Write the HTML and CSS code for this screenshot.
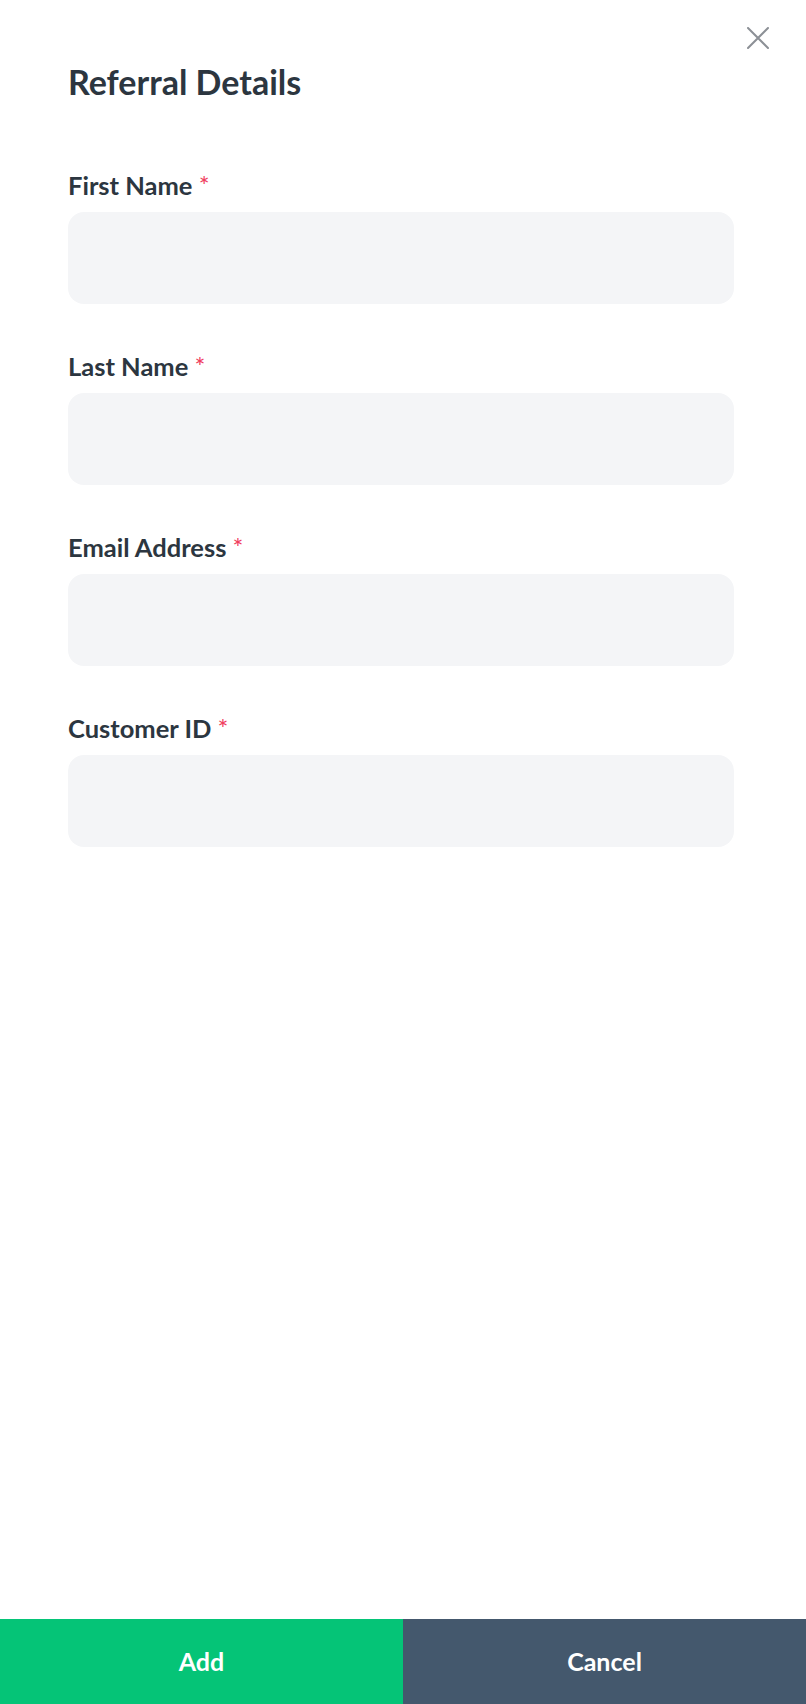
FILE: index.html
```html
<!DOCTYPE html>
<html lang="en">
<head>
    <meta charset="UTF-8">
    <meta name="viewport" content="width=device-width, initial-scale=1.0">
    <title>Referral Details</title>

    <link rel="stylesheet" href="styles.css">
</head>

<body>
    <div class="sheet">
        <button class="close" type="button" aria-label="Close">
            <svg width="22" height="22" viewBox="0 0 22 22">
                <path d="M1 1 L21 21 M21 1 L1 21" stroke="#8c9096" stroke-width="2" fill="none" stroke-linecap="round"/>
            </svg>
        </button>

        <section class="content">
            <h1>Referral Details</h1>

            <form class="fields">
                <div class="field">
                    <label for="first">First Name <span class="req">*</span></label>
                    <input class="input" id="first" type="text">
                </div>
                <div class="field">
                    <label for="last">Last Name <span class="req">*</span></label>
                    <input class="input" id="last" type="text">
                </div>
                <div class="field">
                    <label for="email">Email Address <span class="req">*</span></label>
                    <input class="input" id="email" type="email">
                </div>
                <div class="field">
                    <label for="customer">Customer ID <span class="req">*</span></label>
                    <input class="input" id="customer" type="text">
                </div>
            </form>
        </section>

        <footer class="actions">
            <button class="btn add" type="button">Add</button>
            <button class="btn cancel" type="button">Cancel</button>
        </footer>
    </div>
</body>
</html>
```

FILE: styles.css
```css
body {
    margin: 0px;
    background: white;
    font-family: Lato, "Open Sans", sans-serif;
    color: #2c3640;
}
.sheet {
    position: relative;
    min-height: 100vh;
    display: flex;
    flex-direction: column;
}
.close {
    position: absolute;
    top: 27px;
    right: 37px;
    width: 22px;
    height: 22px;
    padding: 0px;
    border: none;
    background: none;
    cursor: pointer;
}
.close svg {
    display: block;
}
.content {
    padding: 62px 72px 0px 68px;
}
h1 {
    margin: 0px;
    font-size: 34px;
    line-height: 40px;
    font-weight: 700;
}
.fields {
    margin-top: 68px;
    display: flex;
    flex-direction: column;
    gap: 47px;
}
.field label {
    display: block;
    font-size: 25.5px;
    line-height: 30px;
    font-weight: 700;
    margin-bottom: 12px;
}
.req {
    color: #f03e5e;
    font-weight: 400;
}
.input {
    display: block;
    box-sizing: border-box;
    width: 100%;
    height: 92px;
    border: none;
    border-radius: 16px;
    background-color: #f4f5f7;
    padding: 0px 20px;
    font: inherit;
    font-size: 20px;
    outline: none;
}
.actions {
    margin-top: auto;
    display: flex;
    height: 85px;
}
.btn {
    flex: 1;
    border: none;
    color: white;
    font-family: inherit;
    font-size: 25px;
    font-weight: 700;
    padding-bottom: 3px;
    cursor: pointer;
}
.add {
    background-color: #05c477;
}
.cancel {
    background-color: #44586d;
}
```
